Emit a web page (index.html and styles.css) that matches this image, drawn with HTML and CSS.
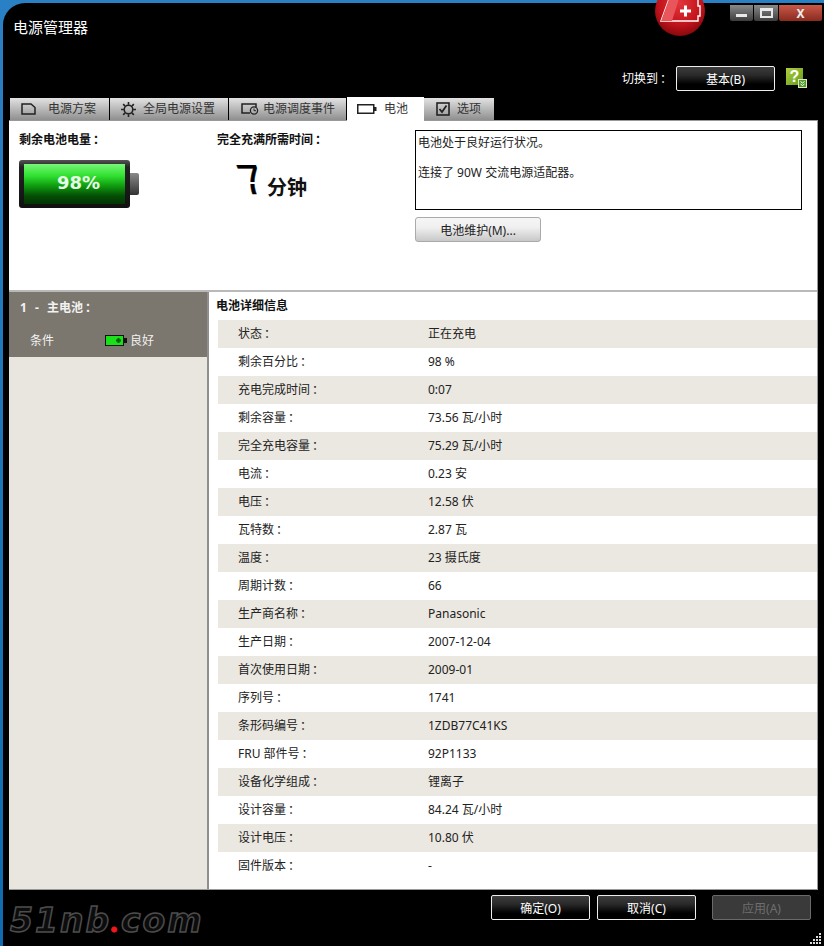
FILE: index.html
```html
<!DOCTYPE html>
<html lang="zh-CN">
<head>
    <meta charset="UTF-8">
    <title>电源管理器</title>
    <link rel="stylesheet" href="styles.css">
</head>
<body>
    <div class="window">
        <div class="logo-ball">
            <svg width="50" height="50" viewBox="0 0 50 50">
                <defs>
                    <radialGradient id="ballFill" cx="0.5" cy="0.35" r="0.7">
                        <stop offset="0" stop-color="#e2343a"/>
                        <stop offset="0.6" stop-color="#c3141c"/>
                        <stop offset="1" stop-color="#7a0609"/>
                    </radialGradient>
                </defs>
                <circle cx="25" cy="25" r="25" fill="url(#ballFill)"/>
                <path d="M6 35 L14 13 H43 V20 H45 V30 H43 V35 Z" fill="none" stroke="#fff" stroke-width="1.4"/>
                <path d="M14 13 H24 L17 35 H6 Z" fill="#e8555a"/>
                <path d="M25 23.5 H29 V19.5 H32 V23.5 H36 V26.5 H32 V30.5 H29 V26.5 H25 Z" fill="#fff"/>
            </svg>
        </div>

        <div class="caption">
            <div class="title">电源管理器</div>
            <div class="win-buttons">
                <div class="win-btn min"><span></span></div>
                <div class="win-btn max"><span></span></div>
                <div class="win-btn close">X</div>
            </div>
        </div>

        <div class="switch-bar">
            <span class="switch-label">切换到<i class="colon">：</i></span>
            <button class="dark-btn switch-btn">基本(B)</button>
            <div class="help-icon">?
                <svg class="help-badge" width="9" height="9" viewBox="0 0 9 9">
                    <rect x="0.5" y="0.5" width="8" height="8" fill="#4f9a2a" stroke="#dfe8c0"/>
                    <path d="M2.5 2.5 L4.5 4 L6.5 2.5 M2.5 5 L4.5 6.5 L6.5 5" fill="none" stroke="#fff"/>
                </svg>
            </div>
        </div>

        <div class="tabs">
            <div class="tab tab-plan">
                <svg width="15" height="12" viewBox="0 0 15 12"><path d="M1 1 H10 L14 4.5 V11 H1 Z" fill="none" stroke="#222" stroke-width="1.5"/></svg>
                <span>电源方案</span>
            </div>
            <div class="tab tab-global">
                <svg width="15" height="15" viewBox="0 0 16 16"><circle cx="8" cy="8" r="4.6" fill="none" stroke="#222" stroke-width="1.7"/><path d="M8 0 V3 M8 13 V16 M0 8 H3 M13 8 H16 M2.3 2.3 L4.4 4.4 M11.6 11.6 L13.7 13.7 M13.7 2.3 L11.6 4.4 M4.4 11.6 L2.3 13.7" stroke="#222" stroke-width="1.7"/></svg>
                <span>全局电源设置</span>
            </div>
            <div class="tab tab-events">
                <svg width="18" height="12" viewBox="0 0 18 12"><path d="M9 10 H1 V1 H15 V4" fill="none" stroke="#222" stroke-width="1.5"/><circle cx="13" cy="7.5" r="3.6" fill="none" stroke="#222" stroke-width="1.3"/><path d="M13 5.5 V7.7 H15" fill="none" stroke="#222"/></svg>
                <span>电源调度事件</span>
            </div>
            <div class="tab tab-battery active">
                <svg width="20" height="10" viewBox="0 0 20 10"><rect x="0.75" y="0.75" width="16" height="8.5" fill="none" stroke="#222" stroke-width="1.5"/><rect x="17" y="3" width="2.5" height="4" fill="#222"/></svg>
                <span>电池</span>
            </div>
            <div class="tab tab-options">
                <svg width="14" height="14" viewBox="0 0 14 14"><rect x="1" y="1" width="12" height="12" fill="none" stroke="#222" stroke-width="1.6"/><path d="M3.5 7 L6 10 L10.5 3.5" fill="none" stroke="#222" stroke-width="1.8"/></svg>
                <span>选项</span>
            </div>
        </div>

        <div class="panel">
            <div class="summary">
                <div class="summary-col">
                    <div class="summary-label">剩余电池电量<i class="colon">：</i></div>
                    <div class="battery">
                        <div class="battery-body"><div class="battery-fill">98%</div></div>
                        <div class="battery-tip"></div>
                    </div>
                </div>
                <div class="summary-col">
                    <div class="summary-label">完全充满所需时间<i class="colon">：</i></div>
                    <div class="time-left"><span class="time-num">7</span><span class="time-unit">分钟</span></div>
                </div>
                <div class="summary-col">
                    <div class="status-box">
                        <p>电池处于良好运行状况。</p>
                        <p>连接了 90W 交流电源适配器。</p>
                    </div>
                    <button class="light-btn">电池维护(M)...</button>
                </div>
            </div>

            <div class="lower">
                <div class="sidebar">
                    <div class="side-head">
                        <div class="side-title">1 - 主电池<i class="colon">：</i></div>
                        <div class="side-row">
                            <span class="side-key">条件</span>
                            <svg width="22" height="11" viewBox="0 0 22 11"><rect x="0.5" y="0.5" width="18" height="10" fill="#19e019" stroke="#111"/><rect x="19" y="3" width="3" height="5" fill="#111"/><path d="M11 5.5 H16 M13.5 3 V8" stroke="#075c07" stroke-width="2"/></svg>
                            <span>良好</span>
                        </div>
                    </div>
                </div>
                <div class="details">
                    <div class="details-title">电池详细信息</div>
                    <div class="row"><span class="key">状态<i class="colon">：</i></span><span>正在充电</span></div>
                    <div class="row"><span class="key">剩余百分比<i class="colon">：</i></span><span>98 %</span></div>
                    <div class="row"><span class="key">充电完成时间<i class="colon">：</i></span><span>0:07</span></div>
                    <div class="row"><span class="key">剩余容量<i class="colon">：</i></span><span>73.56 瓦/小时</span></div>
                    <div class="row"><span class="key">完全充电容量<i class="colon">：</i></span><span>75.29 瓦/小时</span></div>
                    <div class="row"><span class="key">电流<i class="colon">：</i></span><span>0.23 安</span></div>
                    <div class="row"><span class="key">电压<i class="colon">：</i></span><span>12.58 伏</span></div>
                    <div class="row"><span class="key">瓦特数<i class="colon">：</i></span><span>2.87 瓦</span></div>
                    <div class="row"><span class="key">温度<i class="colon">：</i></span><span>23 摄氏度</span></div>
                    <div class="row"><span class="key">周期计数<i class="colon">：</i></span><span>66</span></div>
                    <div class="row"><span class="key">生产商名称<i class="colon">：</i></span><span>Panasonic</span></div>
                    <div class="row"><span class="key">生产日期<i class="colon">：</i></span><span>2007-12-04</span></div>
                    <div class="row"><span class="key">首次使用日期<i class="colon">：</i></span><span>2009-01</span></div>
                    <div class="row"><span class="key">序列号<i class="colon">：</i></span><span>1741</span></div>
                    <div class="row"><span class="key">条形码编号<i class="colon">：</i></span><span>1ZDB77C41KS</span></div>
                    <div class="row"><span class="key">FRU 部件号<i class="colon">：</i></span><span>92P1133</span></div>
                    <div class="row"><span class="key">设备化学组成<i class="colon">：</i></span><span>锂离子</span></div>
                    <div class="row"><span class="key">设计容量<i class="colon">：</i></span><span>84.24 瓦/小时</span></div>
                    <div class="row"><span class="key">设计电压<i class="colon">：</i></span><span>10.80 伏</span></div>
                    <div class="row"><span class="key">固件版本<i class="colon">：</i></span><span>-</span></div>
                </div>
            </div>
        </div>

        <div class="footer">
            <div class="watermark">51nb<span class="dot">.</span>com</div>
            <div class="footer-btns">
                <button class="dark-btn">确定(O)</button>
                <button class="dark-btn">取消(C)</button>
                <button class="dark-btn disabled">应用(A)</button>
            </div>
        </div>

        <svg class="grip" width="12" height="12" viewBox="0 0 12 12" fill="#ddd">
            <rect x="9" y="0" width="2" height="2"/>
            <rect x="6" y="3" width="2" height="2"/><rect x="9" y="3" width="2" height="2"/>
            <rect x="3" y="6" width="2" height="2"/><rect x="6" y="6" width="2" height="2"/><rect x="9" y="6" width="2" height="2"/>
            <rect x="0" y="9" width="2" height="2"/><rect x="3" y="9" width="2" height="2"/><rect x="6" y="9" width="2" height="2"/><rect x="9" y="9" width="2" height="2"/>
        </svg>
    </div>
</body>
</html>
```

FILE: styles.css
```css
* {
    box-sizing: border-box;
}

html, body {
    margin: 0;
    padding: 0;
    height: 946px;
    overflow: hidden;
}

body {
    width: 824px;
    background: linear-gradient(180deg, #2a80c4, #0f6cb0);
    font-family: "Noto Sans", "Noto Sans CJK SC", sans-serif;
    font-size: 12px;
    color: #222;
}

/* Full width colon sits centred in the original font */
.colon {
    font-style: normal;
    margin-left: 2px;
}

.window {
    position: relative;
    width: 821px;
    height: 943px;
    margin: 3px 0 0 3px;
    background: #000;
    border-top-left-radius: 22px;
    display: flex;
    flex-direction: column;
}

/* Red ball sits over the frame edge */
.logo-ball {
    position: absolute;
    left: 652px;
    top: -17px;
    height: 50px;
    clip-path: inset(14px 0 0 0);
}

.caption {
    height: 60px;
    display: flex;
    justify-content: space-between;
    padding: 2px 2px 0 11px;
}

.title {
    color: #fff;
    font-size: 15px;
    line-height: 20px;
    margin-top: 12px;
    margin-left: -1px;
}

.win-buttons {
    display: flex;
    height: 16px;
}

.win-btn {
    height: 16px;
    display: flex;
    align-items: center;
    justify-content: center;
    border-bottom-left-radius: 2px;
    border-bottom-right-radius: 2px;
}

.win-btn.min {
    width: 23px;
    background: linear-gradient(180deg, #8a8a8a, #3d3d3d);
}

.win-btn.min span {
    width: 11px;
    height: 3px;
    margin-top: 4px;
    background: #e8e8e8;
}

.win-btn.max {
    width: 24px;
    margin: 0 1px;
    background: linear-gradient(180deg, #8a8a8a, #3d3d3d);
}

.win-btn.max span {
    width: 13px;
    height: 10px;
    border: 2px solid #e8e8e8;
    border-top-width: 3px;
}

.win-btn.close {
    width: 43px;
    background: linear-gradient(180deg, #c9584a, #8a2a1e);
    color: #eee;
    font-weight: 700;
    font-size: 12px;
}

.switch-bar {
    height: 34px;
    display: flex;
    align-items: flex-start;
    padding-top: 3px;
    padding-left: 619px;
}

.switch-label {
    color: #fff;
    line-height: 25px;
    width: 54px;
    white-space: nowrap;
}

.dark-btn {
    height: 25px;
    width: 99px;
    padding: 0;
    border: 1px solid #eee;
    border-radius: 2px;
    background: linear-gradient(180deg, #3c3c3c 0%, #2a2a2a 35%, #000 75%);
    color: #fff;
    font-family: inherit;
    font-size: 12px;
}

.switch-btn {
    width: 99px;
}

.help-icon {
    position: relative;
    width: 17px;
    height: 17px;
    margin-left: 11px;
    margin-top: 2px;
    background: linear-gradient(135deg, #b3cf3a, #5f9a1c);
    color: #fff;
    font-family: "Liberation Sans", sans-serif;
    font-weight: 700;
    font-size: 16px;
    line-height: 17px;
    text-align: center;
}

.help-badge {
    position: absolute;
    right: -4px;
    bottom: -3px;
}

.tabs {
    height: 23px;
    display: flex;
    padding-left: 7px;
    align-items: flex-end;
}

.tab {
    height: 22px;
    margin-right: 1px;
    display: flex;
    align-items: center;
    background: linear-gradient(180deg, #e2e2e2, #8f8f8f);
    color: #333;
}

.tab span {
    line-height: 22px;
}

.tab-plan {
    width: 99px;
    padding-left: 11px;
    gap: 12px;
}

.tab-global {
    width: 118px;
    padding-left: 11px;
    gap: 7px;
}

.tab-events {
    width: 117px;
    padding-left: 12px;
    gap: 4px;
}

.tab-battery {
    width: 77px;
    padding-left: 10px;
    gap: 7px;
}

.tab-options {
    width: 70px;
    padding-left: 12px;
    gap: 7px;
    margin-right: 0;
}

.tab.active {
    height: 24px;
    background: #fff;
    margin-right: 0;
    margin-bottom: -1px;
    position: relative;
}

.panel {
    width: 809px;
    height: 770px;
    margin-left: 6px;
    background: #fff;
    border-top: 1px solid #999;
    border-right: 1px solid #999;
    border-bottom: 1px solid #999;
    display: flex;
    flex-direction: column;
}

.summary {
    height: 171px;
    flex: none;
    display: grid;
    grid-template-columns: 198px 198px 387px;
    padding: 9px 0 0 10px;
    border-bottom: 2px solid #b9b9b9;
}

.summary-label {
    font-weight: 700;
    line-height: 18px;
    margin-top: 1px;
    color: #111;
}

.battery {
    display: flex;
    align-items: center;
    margin-top: 11px;
}

.battery-body {
    width: 111px;
    height: 48px;
    padding: 4px 5px;
    background: linear-gradient(180deg, #555, #222 15%, #111);
    border-radius: 3px;
}

.battery-fill {
    height: 40px;
    background: linear-gradient(180deg, #78f878 0%, #2fe02f 30%, #0f9a0f 55%, #044d04 80%, #033503 100%);
    color: #e6fbe6;
    font-family: "DejaVu Sans", sans-serif;
    font-weight: 700;
    font-size: 18px;
    line-height: 38px;
    text-align: center;
    padding-left: 8px;
}

.battery-tip {
    width: 9px;
    height: 22px;
    background: linear-gradient(180deg, #8a8a8a, #333);
    border-radius: 0 2px 2px 0;
}

.time-left {
    display: flex;
    align-items: flex-end;
    padding-left: 23px;
    margin-top: 9px;
}

.time-num {
    position: relative;
    display: block;
    width: 27px;
    font-family: "Liberation Sans", sans-serif;
    font-size: 42px;
    line-height: 44px;
    color: #000;
    -webkit-text-stroke: 0.4px #000;
    transform: skewX(20deg);
}

/* Gap between the two segments of the digit */
.time-num::after {
    content: "";
    position: absolute;
    left: 2px;
    top: 24px;
    width: 24px;
    height: 2px;
    background: #fff;
}

.time-unit {
    font-size: 20px;
    font-weight: 700;
    line-height: 28px;
    color: #111;
}

.status-box {
    width: 387px;
    height: 80px;
    border: 1px solid #000;
    padding: 3px 2px;
    line-height: 18px;
}

.status-box p {
    margin: 0 0 12px;
}

.light-btn {
    display: block;
    width: 126px;
    height: 25px;
    margin-top: 7px;
    padding: 0;
    border: 1px solid #aaa;
    border-radius: 3px;
    background: linear-gradient(180deg, #f6f6f6, #f0f0f0 40%, #c8c8c8);
    color: #222;
    font-family: inherit;
    font-size: 12px;
}

.lower {
    flex: 1;
    display: flex;
    min-height: 0;
}

.sidebar {
    width: 198px;
    flex: none;
    background: #e9e6df;
}

.side-head {
    height: 65px;
    background: #7b776e;
    color: #f2f2f2;
    padding: 6px 0 0 11px;
}

.side-title {
    font-weight: 700;
    line-height: 20px;
    word-spacing: 5px;
}

.side-row {
    display: flex;
    align-items: center;
    height: 20px;
    margin-top: 12px;
    padding-left: 10px;
}

.side-key {
    width: 75px;
}

.side-row svg {
    margin-right: 3px;
}

.details {
    flex: 1;
    border-left: 2px solid #8f8f8f;
    padding-left: 9px;
}

.details-title {
    height: 28px;
    margin-left: -2px;
    font-weight: 700;
    line-height: 28px;
    color: #111;
}

.row {
    height: 28px;
    padding-bottom: 2px;
    display: flex;
    align-items: center;
    color: #222;
}

.row:nth-child(even) {
    background: #ebe8e1;
}

.row .key {
    width: 210px;
    padding-left: 20px;
    flex: none;
}

.footer {
    flex: 1;
    display: flex;
    justify-content: space-between;
    padding: 5px 13px 0 6px;
}

.watermark {
    font-family: "DejaVu Sans", sans-serif;
    font-weight: 700;
    font-style: italic;
    font-size: 33px;
    line-height: 40px;
    letter-spacing: 2px;
    color: #0c0c0c;
    -webkit-text-stroke: 1.5px #4c4c4c;
    margin-top: 4px;
    margin-left: 1px;
}

.watermark .dot {
    font-family: "Lato", sans-serif;
    color: #f01818;
    -webkit-text-stroke: 1px #f01818;
}

.footer-btns {
    display: flex;
    gap: 7px;
}

.footer-btns .disabled {
    margin-left: 9px;
    background: #3a3a3a;
    border-color: #6a6a6a;
    color: #6e6e6e;
}

.grip {
    position: absolute;
    right: 2px;
    bottom: 1px;
}
```
